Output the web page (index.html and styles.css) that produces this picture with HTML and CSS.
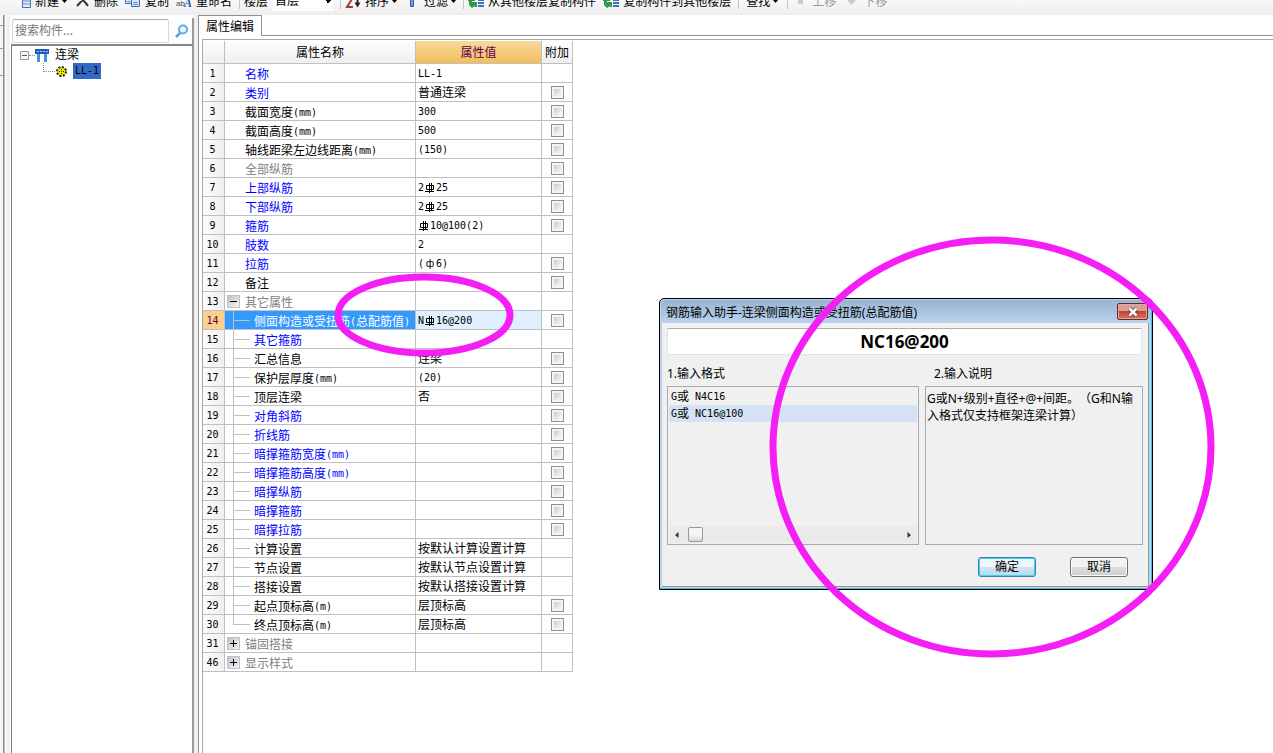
FILE: index.html
```html
<!DOCTYPE html>
<html lang="zh-CN">
<head>
<meta charset="utf-8">
<title>属性编辑</title>
<link rel="stylesheet" href="styles.css">
</head>
<body>
<svg class="defs" aria-hidden="true">
  <symbol id="rebar" viewBox="0 0 10 10"><path d="M1.500 2.500h7v4h-7zM4.500 0v10M6.500 0v8M0 8.500h9" fill="none" stroke="currentColor"/></symbol>
  <symbol id="down" viewBox="0 0 5 16"><path d="M0 7h5L2.500 10z" fill="#000"/></symbol>
  <symbol id="copyfloor" viewBox="0 0 16 16"><path d="M0 0h7v8H0z" fill="#5b6f7c"/><path d="M10 1h6M10 4h6M10 7h6M10 10h6M10 13h6" stroke="#3c6fb4" stroke-width="2"/><path d="M1 7h3v2h5v5H7v-1l-3 2-3-3z" fill="#2c9c48"/></symbol>
</svg>
<div class="app">
  <nav class="toolbar" aria-label="工具栏">
    <button class="tool"><svg class="ico" viewBox="0 0 16 16"><path d="M7.500 2.500h8v12h-8z" fill="#e3edf9" stroke="#4c6eb0"/><path d="M8 8h7M8 11h7" stroke="#5f87c7"/></svg>新建<svg class="arrow"><use href="#down"/></svg></button>
    <button class="tool"><svg class="ico" viewBox="0 0 16 16"><path d="M3 13L13 2M4 4q6 3 10 9" fill="none" stroke="#333" stroke-width="2"/></svg>删除</button>
    <button class="tool"><svg class="ico" viewBox="0 0 16 16"><path d="M.5 2.500h8v8h-8z" fill="#dce8f7" stroke="#3f66a8"/><path d="M6.500 5.500h8v8h-8z" fill="#dce8f7" stroke="#3f66a8"/><path d="M8 9.500h5M8 11.500h5M2 8.500h3" stroke="#5f87c7"/></svg>复制</button>
    <button class="tool"><svg class="ico" viewBox="0 0 16 16"><text x="0" y="13" class="svg-ab">ab</text><text x="8" y="14" class="svg-a">A</text></svg>重命名</button>
    <span class="sep"></span>
    <label class="tool" for="floor">楼层</label>
    <select id="floor" class="floor"><option>首层</option></select>
    <span class="sep"></span>
    <button class="tool"><svg class="ico" viewBox="0 0 16 16"><path d="M2 6h5l-5 8h6" fill="none" stroke="#a23c3c" stroke-width="2"/><path d="M12.500 3v8" stroke="#222" stroke-width="2"/><path d="M9.500 9.500h6l-3 5z" fill="#222"/></svg>排序<svg class="arrow"><use href="#down"/></svg></button>
    <button class="tool"><svg class="ico" viewBox="0 0 16 16"><path d="M6.500 3.500h3v10h-3z" fill="#6ba0ee" stroke="#2d56b5"/></svg>过滤<svg class="arrow"><use href="#down"/></svg></button>
    <span class="sep"></span>
    <button class="tool"><svg class="ico"><use href="#copyfloor"/></svg>从其他楼层复制构件</button>
    <button class="tool"><svg class="ico"><use href="#copyfloor"/></svg>复制构件到其他楼层</button>
    <span class="sep"></span>
    <button class="tool find">查找<svg class="arrow"><use href="#down"/></svg></button>
    <span class="sep"></span>
    <button class="tool off"><svg class="ico" viewBox="0 0 16 16"><path d="M6 2h5v9H6z" fill="#ccc"/></svg>上移</button>
    <button class="tool off"><svg class="ico" viewBox="0 0 16 16"><path d="M4 7h9l-4.500 5z" fill="#ccc"/></svg>下移</button>
  </nav>

  <div class="work">
    <div class="strip"><span></span><span></span><span></span></div>
    <aside class="side">
      <div class="search">
        <input type="text" placeholder="搜索构件..." aria-label="搜索构件">
        <button class="go" aria-label="搜索"><svg viewBox="0 0 14 14"><circle cx="8" cy="5.500" r="4" fill="#eaf6ff" stroke="#5cabe8" stroke-width="2"/><path d="M5 9L1 13" stroke="#5b9fdd" stroke-width="2.500"/></svg></button>
      </div>
      <ul class="tree">
        <li class="node">
          <svg class="toggle" viewBox="0 0 9 9"><path d="M.5.5h8v8h-8z" fill="#f6f6f6" stroke="#999"/><path d="M2 4.500h5" stroke="#3a5c9c"/></svg>
          <span class="dots"></span>
          <svg class="beam" viewBox="0 0 15 15"><path d="M0 1h14v5H0z" fill="#1c5db8"/><path d="M2 3.500h11" stroke="#9cc3f2" stroke-dasharray="2 1"/><path d="M3.500 6v8M10.500 6v8" stroke="#4b8ee0" stroke-width="3"/></svg>
          <span class="node-name">连梁</span>
        </li>
        <li class="node leaf">
          <span class="elbow"></span>
          <svg class="gear" viewBox="0 0 11 11"><circle cx="5.500" cy="5.500" r="4.500" fill="#f4ea00" stroke="#222" stroke-width="2" stroke-dasharray="2 1.500"/><circle cx="5.500" cy="5.500" r="3" fill="#f4ea00"/><path d="M5.500 3v1M5.500 7v1M3 5.500h1M7 5.500h1M5 5.500h1" stroke="#222"/></svg>
          <span class="picked">LL-1</span>
        </li>
      </ul>
    </aside>

    <main class="props">
      <div class="tabs"><button class="tab">属性编辑</button><span class="tabline"></span></div>
      <div class="sheet">
        <table class="grid">
          <colgroup><col class="c-no"><col class="c-name"><col class="c-val"><col class="c-add"></colgroup>
          <thead><tr><th></th><th>属性名称</th><th class="hot">属性值</th><th>附加</th></tr></thead>
          <tbody>
          <tr><th>1</th><td class="n key">名称</td><td class="v"><i>LL-1</i></td><td></td></tr>
          <tr><th>2</th><td class="n key">类别</td><td class="v">普通连梁</td><td><input type="checkbox" aria-label="附加 类别"></td></tr>
          <tr><th>3</th><td class="n">截面宽度<i>(mm)</i></td><td class="v"><i>300</i></td><td><input type="checkbox" aria-label="附加 截面宽度"></td></tr>
          <tr><th>4</th><td class="n">截面高度<i>(mm)</i></td><td class="v"><i>500</i></td><td><input type="checkbox" aria-label="附加 截面高度"></td></tr>
          <tr><th>5</th><td class="n">轴线距梁左边线距离<i>(mm)</i></td><td class="v"><i>(150)</i></td><td><input type="checkbox" aria-label="附加 轴线距梁左边线距离"></td></tr>
          <tr><th>6</th><td class="n dim">全部纵筋</td><td class="v"></td><td><input type="checkbox" aria-label="附加 全部纵筋"></td></tr>
          <tr><th>7</th><td class="n key">上部纵筋</td><td class="v"><i>2<svg class="rb"><use href="#rebar"/></svg>25</i></td><td><input type="checkbox" aria-label="附加 上部纵筋"></td></tr>
          <tr><th>8</th><td class="n key">下部纵筋</td><td class="v"><i>2<svg class="rb"><use href="#rebar"/></svg>25</i></td><td><input type="checkbox" aria-label="附加 下部纵筋"></td></tr>
          <tr><th>9</th><td class="n key">箍筋</td><td class="v"><i><svg class="rb"><use href="#rebar"/></svg>10@100(2)</i></td><td><input type="checkbox" aria-label="附加 箍筋"></td></tr>
          <tr><th>10</th><td class="n key">肢数</td><td class="v"><i>2</i></td><td></td></tr>
          <tr><th>11</th><td class="n key">拉筋</td><td class="v"><i>(<b class="phi">ф</b>6)</i></td><td><input type="checkbox" aria-label="附加 拉筋"></td></tr>
          <tr><th>12</th><td class="n">备注</td><td class="v"></td><td><input type="checkbox" aria-label="附加 备注"></td></tr>
          <tr><th>13</th><td class="n dim group"><button class="fold" aria-label="折叠"><svg viewBox="0 0 9 9"><path d="M1 4.500h7" stroke="#000"/></svg></button>其它属性</td><td class="v"></td><td></td></tr>
          <tr class="current"><th>14</th><td class="n child">侧面构造或受扭筋<i>(</i>总配筋值<i>)</i></td><td class="v"><i>N<svg class="rb"><use href="#rebar"/></svg>16@200</i></td><td><input type="checkbox" aria-label="附加 侧面构造或受扭筋"></td></tr>
          <tr><th>15</th><td class="n key child">其它箍筋</td><td class="v"></td><td></td></tr>
          <tr><th>16</th><td class="n child">汇总信息</td><td class="v">连梁</td><td><input type="checkbox" aria-label="附加 汇总信息"></td></tr>
          <tr><th>17</th><td class="n child">保护层厚度<i>(mm)</i></td><td class="v"><i>(20)</i></td><td><input type="checkbox" aria-label="附加 保护层厚度"></td></tr>
          <tr><th>18</th><td class="n child">顶层连梁</td><td class="v">否</td><td><input type="checkbox" aria-label="附加 顶层连梁"></td></tr>
          <tr><th>19</th><td class="n key child">对角斜筋</td><td class="v"></td><td><input type="checkbox" aria-label="附加 对角斜筋"></td></tr>
          <tr><th>20</th><td class="n key child">折线筋</td><td class="v"></td><td><input type="checkbox" aria-label="附加 折线筋"></td></tr>
          <tr><th>21</th><td class="n key child">暗撑箍筋宽度<i>(mm)</i></td><td class="v"></td><td><input type="checkbox" aria-label="附加 暗撑箍筋宽度"></td></tr>
          <tr><th>22</th><td class="n key child">暗撑箍筋高度<i>(mm)</i></td><td class="v"></td><td><input type="checkbox" aria-label="附加 暗撑箍筋高度"></td></tr>
          <tr><th>23</th><td class="n key child">暗撑纵筋</td><td class="v"></td><td><input type="checkbox" aria-label="附加 暗撑纵筋"></td></tr>
          <tr><th>24</th><td class="n key child">暗撑箍筋</td><td class="v"></td><td><input type="checkbox" aria-label="附加 暗撑箍筋"></td></tr>
          <tr><th>25</th><td class="n key child">暗撑拉筋</td><td class="v"></td><td><input type="checkbox" aria-label="附加 暗撑拉筋"></td></tr>
          <tr><th>26</th><td class="n child">计算设置</td><td class="v">按默认计算设置计算</td><td></td></tr>
          <tr><th>27</th><td class="n child">节点设置</td><td class="v">按默认节点设置计算</td><td></td></tr>
          <tr><th>28</th><td class="n child">搭接设置</td><td class="v">按默认搭接设置计算</td><td></td></tr>
          <tr><th>29</th><td class="n child">起点顶标高<i>(m)</i></td><td class="v">层顶标高</td><td><input type="checkbox" aria-label="附加 起点顶标高"></td></tr>
          <tr><th>30</th><td class="n child last">终点顶标高<i>(m)</i></td><td class="v">层顶标高</td><td><input type="checkbox" aria-label="附加 终点顶标高"></td></tr>
          <tr><th>31</th><td class="n dim group"><button class="fold" aria-label="展开"><svg viewBox="0 0 9 9"><path d="M1 4.500h7M4.500 1v7" stroke="#000"/></svg></button>锚固搭接</td><td class="v"></td><td></td></tr>
          <tr><th>46</th><td class="n dim group"><button class="fold" aria-label="展开"><svg viewBox="0 0 9 9"><path d="M1 4.500h7M4.500 1v7" stroke="#000"/></svg></button>显示样式</td><td class="v"></td><td></td></tr>
          </tbody>
        </table>
      </div>
    </main>
  </div>

  <section class="dialog" role="dialog" aria-labelledby="dlg-title">
    <header class="caption">
      <h2 id="dlg-title">钢筋输入助手-连梁侧面构造或受扭筋(总配筋值)</h2>
      <button class="close" aria-label="关闭"><svg viewBox="0 0 12 10"><path d="M2.500 1.500l7 7M9.500 1.500l-7 7" stroke="#5a3a3c" stroke-width="4"/><path d="M2.500 1.500l7 7M9.500 1.500l-7 7" stroke="#fff" stroke-width="2.500"/></svg></button>
    </header>
    <div class="body">
      <input class="entry" type="text" value="NC16@200" aria-label="钢筋">
      <div class="columns">
        <div class="format">
          <h3>1.输入格式</h3>
          <div class="box">
            <ul class="options"><li><i>G</i>或<i> N4C16</i></li><li class="on"><i>G</i>或<i> NC16@100</i></li></ul>
            <div class="scroll"><svg viewBox="0 0 5 8"><path d="M4.500 1v6L1 4z" fill="#333"/></svg><span class="thumb"></span><svg class="end" viewBox="0 0 5 8"><path d="M.5 1v6L4 4z" fill="#333"/></svg></div>
          </div>
        </div>
        <div class="help">
          <h3>2.输入说明</h3>
          <p class="box">G或N+级别+直径+@+间距。（G和N输入格式仅支持框架连梁计算）</p>
        </div>
      </div>
      <footer class="actions"><button class="btn main">确定</button><button class="btn">取消</button></footer>
    </div>
  </section>

  <svg class="marks" aria-hidden="true"><g fill="none" stroke="#f51ef5" stroke-width="7"><ellipse cx="424" cy="315" rx="86" ry="38"/><ellipse cx="992" cy="447" rx="219" ry="207"/></g></svg>
</div>
</body>
</html>
```
FILE: styles.css
```css
* { box-sizing: border-box; }
html, body { height: 100%; margin: 0; }
body, button, input, select {
  font-family: "Noto Sans", "Noto Sans CJK SC", sans-serif;
  font-size: 12px;
  color: #000;
}
body { overflow: hidden; background: #fff; }
h2, h3, ul, p { margin: 0; padding: 0; font-size: 12px; font-weight: normal; }
ul { list-style: none; }
button { margin: 0; padding: 0; border: 0; background: none; }
i { font: 10px "DejaVu Sans Mono", monospace; vertical-align: 1px; white-space: pre; }
.defs { display: none; }
.app { position: relative; display: flex; flex-direction: column; height: 100vh; }

/* toolbar */
.toolbar {
  flex: none;
  display: flex;
  align-items: flex-end;
  gap: 7px;
  height: 15px;
  padding: 0 0 6px 15px;
  overflow: hidden;
  white-space: nowrap;
  background: linear-gradient(#f8f8f8, #eee);
}
.tool { display: flex; flex: none; align-items: center; gap: 4px; height: 16px; line-height: 16px; font-family: "Noto Sans CJK SC", sans-serif; }
.off { color: #999; }
.ico { width: 16px; height: 16px; }
.arrow { width: 5px; height: 16px; margin-left: -1px; }
.find { padding: 0 2px 0 3px; }
.sep { flex: none; width: 1px; height: 14px; margin-right: -3px; background: #c4c4c4; }
.svg-ab { font: 8px "Liberation Sans", sans-serif; fill: #444; }
.svg-a { font: italic bold 12px "Liberation Serif", serif; fill: #2458ad; }
.floor {
  width: 61px;
  height: 20px;
  margin: 0 0 -2px -3px;
  padding: 0 3px 4px;
  border: 0;
  appearance: none;
  font-family: "Noto Sans CJK SC", sans-serif;
  background: conic-gradient(from -45deg at 50% 100%, #000 90deg, transparent 0) 53px 9px / 6px 3px no-repeat, #fff;
}

/* main columns */
.work { flex: 1; display: flex; min-height: 0; }
.strip { flex: none; width: 11px; border-right: 1px solid #fff; background: linear-gradient(90deg, #f4f4f4 3px, #8a8a8a 3px 4px, #bbb 4px 5px, #fff 5px 6px, #f0f0f0 6px); }
.strip span { display: block; width: 4px; height: 11px; border-bottom: 1px solid #999; }
.strip span + span { height: 23px; }
.strip span + span + span { height: 27px; }
.side { flex: none; display: flex; flex-direction: column; width: 187px; padding: 3px 0 0; border-right: 4px solid #f0f0f0; }
.search { display: flex; align-items: center; gap: 6px; height: 26px; border-right: 2px solid #999; background: #fdfdfd; }
.search input { flex: 1; min-width: 0; height: 24px; margin-left: 1px; padding: 0 2px 3px; border: 1px solid #d4d8e2; border-top-color: #a9adb5; border-radius: 2px; font-family: "Noto Sans CJK SC", sans-serif; background: #fff; }
.search input::placeholder { color: #777; opacity: 1; }
.go { width: 16px; height: 16px; margin-right: 1px; }
.go svg { display: block; width: 14px; height: 14px; }
.tree { flex: 1; padding: 1px 0 0 8px; border: 1px solid #77777c; border-width: 2px 2px 0 1px; border-color: #85858a #999 #999 #77777c; }
.node { display: flex; align-items: center; height: 16px; line-height: 16px; }
.toggle { width: 9px; height: 9px; }
.dots { width: 6px; border-top: 1px dotted #888; }
.beam { width: 15px; height: 15px; }
.node-name { padding-left: 5px; }
.leaf { padding-left: 23px; }
.elbow { width: 12px; height: 9px; margin-bottom: 7px; border: 1px dotted #888; border-width: 0 0 1px 1px; }
.gear { width: 11px; height: 11px; margin: 0 6px 0 1px; }
.picked { width: 28px; padding-left: 2px; background: #316ac5; font: 10px/16px "DejaVu Sans Mono", monospace; }

.props { flex: 1; display: flex; flex-direction: column; min-width: 0; border-left: 1px solid #8f8f94; }
.tabs { display: flex; height: 21px; margin-bottom: 3px; }
.tab { width: 63px; border: 1px solid #8f8f94; border-width: 1px 1px 0 0; font-family: "Noto Sans CJK SC", sans-serif; line-height: 18px; }
.tabline { flex: 1; border-bottom: 1px solid #8f8f94; }
.sheet { flex: 1; margin-left: 3px; padding: 1px 0 0; border: 1px solid #a8a8ac; border-width: 1px 0 0 1px; }

/* property grid */
.grid { width: 370px; table-layout: fixed; border-collapse: separate; border-spacing: 0; font-family: "Noto Sans CJK SC", sans-serif; line-height: 16px; }
.c-no { width: 22px; }
.c-name { width: 191px; }
.c-val { width: 126px; }
.c-add { width: 31px; }
.grid th, .grid td { height: 19px; padding: 0; border: 1px solid #c0c0c0; border-width: 0 1px 1px 0; font-weight: normal; white-space: nowrap; overflow: hidden; }
.grid thead th { height: 23px; background: linear-gradient(#fdfdfd, #efefef); }
.grid thead .hot { color: #60004c; background: linear-gradient(#f9d99d, #f1be5c); }
.grid tbody th { padding-top: 1px; padding-right: 2px; font: 10px/16px "DejaVu Sans Mono", monospace; background: linear-gradient(90deg, #fbfbfb, #f0f0f0); }
.grid td { text-align: center; vertical-align: middle; }
.grid .n { padding: 2px 0 0 20px; text-align: left; }
.grid .v { padding: 0 0 1px 2px; text-align: left; }
.grid .key { color: #00f; }
.grid .dim { color: #808080; }
.grid .child {
  padding-left: 29px;
  background: linear-gradient(#c0c0c0, #c0c0c0) 8px 0 / 1px 100% no-repeat, linear-gradient(#c0c0c0, #c0c0c0) 8px 9px / 17px 1px no-repeat;
}
.grid .last { background-size: 1px 10px, 17px 1px; }
.grid .group { padding-left: 2px; }
.fold { float: left; width: 13px; height: 13px; margin: 1px 5px 0 0; padding: 1px; border: 1px solid #c0c0c0; background: linear-gradient(135deg, #bcc2cc, #f6f6f6); }
.fold svg { display: block; width: 9px; height: 9px; }
.grid .current .child { color: #fff; background-color: #3399ff; }
.grid .current .v { background: #e0efff; }
.grid .current th { color: #60004c; background: #fdd08a; }
.grid input { display: block; appearance: none; width: 13px; height: 13px; margin: 1px auto 0; border: 1px solid #8e8f8f; padding: 2px; background: linear-gradient(135deg, #c9ccd4, #f7f7f7) content-box, #f4f4f4; }
.rb { width: 10px; height: 10px; margin: 0 1px; vertical-align: -2px; }
.phi { display: inline-block; width: 12px; font: 10px/10px "DejaVu Sans", sans-serif; text-align: center; }

/* helper dialog */
.dialog {
  position: absolute;
  left: 659px;
  top: 298px;
  width: 494px;
  padding: 1px;
  border: 1px solid #000;
  border-radius: 5px 5px 0 0;
  box-shadow: inset -1px -1px #35c5e8;
  background: #b9d1ea;
}
.caption { display: flex; align-items: center; justify-content: space-between; height: 23px; padding: 0 3px 0 5px; border-radius: 4px 4px 0 0; background: linear-gradient(#98b4d2, #bad2ec); }
.close { width: 31px; height: 17px; border: 1px solid #6a2a2a; border-radius: 2px; box-shadow: inset 0 0 0 1px #e0a89c; background: linear-gradient(#dc9f92 45%, #bd4432 50%, #d17965); }
.close svg { display: block; width: 12px; height: 10px; margin: 0 auto; }
.body { margin: 0 2px 1px 1px; padding: 5px 5px 9px; border: 1px solid #999; border-width: 0 1px 1px 0; background: #f0f0f0; }
.entry { display: block; width: 475px; max-width: 100%; height: 27px; padding: 0 0 1px; border: 1px solid #dfe3ee; border-top-color: #abadb3; background: #fff; font-family: "Noto Sans", sans-serif; font-size: 17px; font-weight: bold; text-align: center; }
.columns { display: grid; grid-template-columns: 252px 218px; gap: 6px; padding-top: 9px; }
.columns h3 { height: 22px; line-height: 20px; }
.help h3 { padding-left: 9px; }
.box { display: flex; flex-direction: column; justify-content: space-between; height: 159px; border: 1px solid #a8aab0; line-height: 17px; }
.help .box { display: block; padding: 3px 4px 0 1px; text-spacing-trim: space-all; }
.options { padding: 1px; font-family: "Noto Sans CJK SC", sans-serif; }
.options li { height: 17px; padding-left: 2px; line-height: 16px; }
.options .on { background: #d3e3f3; }
.scroll { display: flex; align-items: center; gap: 9px; height: 17px; margin: 0 1px 1px; padding: 0 5px; background: #eaeaea; }
.scroll svg { width: 5px; height: 8px; }
.scroll .end { margin-left: auto; }
.thumb { width: 15px; height: 15px; border: 1px solid #999; border-radius: 2px; background: linear-gradient(#f5f5f5 50%, #d6d6d6); }
.actions { display: flex; justify-content: flex-end; gap: 34px; padding: 12px 15px 0 0; }
.btn { width: 58px; height: 20px; border: 1px solid #707070; border-radius: 3px; box-shadow: inset 0 0 0 1px #fbfbfb; background: linear-gradient(#f2f2f2 50%, #ddd 50%, #cfcfcf); line-height: 16px; }
.btn.main { border-color: #3c7fb1; box-shadow: inset 0 0 0 1px #46cff5; background: linear-gradient(#eef6fb 50%, #d0e5f1 50%, #bcd9e9); }

.marks { position: absolute; left: 0; top: 0; width: 100%; height: 100%; pointer-events: none; }
```
